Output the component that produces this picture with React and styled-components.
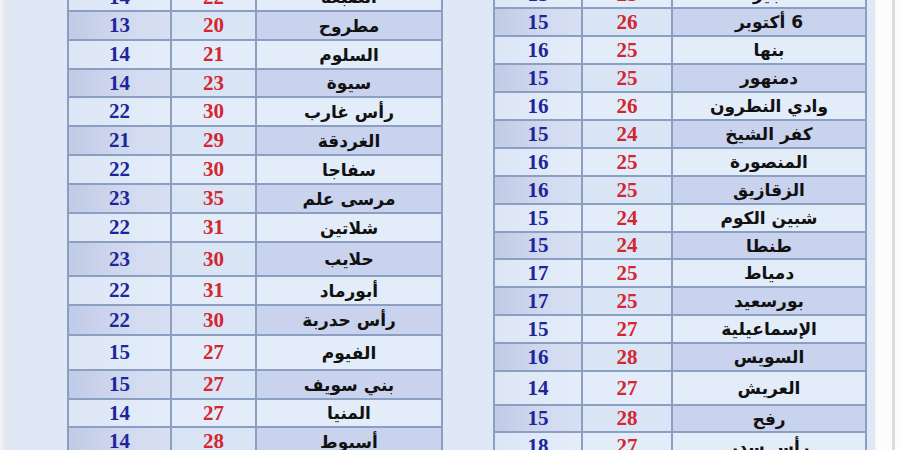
import React from "react"
import styled, { createGlobalStyle } from "styled-components"

const leftRows = [
  { min: 14, max: 22, city: "الضبعة", h: 28 },
  { min: 13, max: 20, city: "مطروح", h: 29 },
  { min: 14, max: 21, city: "السلوم", h: 29 },
  { min: 14, max: 23, city: "سيوة", h: 28 },
  { min: 22, max: 30, city: "رأس غارب", h: 29 },
  { min: 21, max: 29, city: "الغردقة", h: 29 },
  { min: 22, max: 30, city: "سفاجا", h: 29 },
  { min: 23, max: 35, city: "مرسى علم", h: 29 },
  { min: 22, max: 31, city: "شلاتين", h: 29 },
  { min: 23, max: 30, city: "حلايب", h: 34 },
  { min: 22, max: 31, city: "أبورماد", h: 29 },
  { min: 22, max: 30, city: "رأس حدربة", h: 30 },
  { min: 15, max: 27, city: "الفيوم", h: 35 },
  { min: 15, max: 27, city: "بني سويف", h: 29 },
  { min: 14, max: 27, city: "المنيا", h: 28 },
  { min: 14, max: 28, city: "أسيوط", h: 29 },
]

const rightRows = [
  { min: 15, max: 25, city: "الجيزة", h: 28 },
  { min: 15, max: 26, city: "6 أكتوبر", h: 28 },
  { min: 16, max: 25, city: "بنها", h: 28 },
  { min: 15, max: 25, city: "دمنهور", h: 28 },
  { min: 16, max: 26, city: "وادي النطرون", h: 28 },
  { min: 15, max: 24, city: "كفر الشيخ", h: 28 },
  { min: 16, max: 25, city: "المنصورة", h: 28 },
  { min: 16, max: 25, city: "الزقازيق", h: 28 },
  { min: 15, max: 24, city: "شبين الكوم", h: 28 },
  { min: 15, max: 24, city: "طنطا", h: 27 },
  { min: 17, max: 25, city: "دمياط", h: 28 },
  { min: 17, max: 25, city: "بورسعيد", h: 28 },
  { min: 15, max: 27, city: "الإسماعيلية", h: 28 },
  { min: 16, max: 28, city: "السويس", h: 28 },
  { min: 14, max: 27, city: "العريش", h: 34 },
  { min: 15, max: 28, city: "رفح", h: 27 },
  { min: 18, max: 27, city: "رأس سدر", h: 29 },
]

const GlobalStyle = createGlobalStyle`
  html, body {
    margin: 0;
    padding: 0;
    width: 900px;
    height: 450px;
    overflow: hidden;
    background: #dfe9f6;
  }
  * {
    box-sizing: border-box;
  }
`

const Page = styled.div`
  display: flex;
  width: 900px;
  height: 450px;
  overflow: hidden;
  background: #dfe9f6;
`

const EdgeLeft = styled.div`
  width: 8px;
  flex-shrink: 0;
  background: linear-gradient(90deg, #f4f4f6, #e6e8ee 60%, #dde6f2);
`

const Sheet = styled.div`
  display: flex;
  gap: 50px;
  padding-left: 59px;
  width: 863px;
  flex-shrink: 0;
`

const Table = styled.div`
  width: ${(p) => p.$width}px;
  margin-top: ${(p) => p.$offset}px;
  display: flex;
  flex-direction: column;
  border-left: 2px solid #8b9fc2;
  border-right: 2px solid #8b9fc2;
  align-self: flex-start;
`

const Row = styled.div`
  display: grid;
  grid-template-columns: ${(p) => p.$cols};
  height: ${(p) => p.$h}px;
  border-top: 2px solid #8b9fc2;
`

const Cell = styled.div`
  display: flex;
  align-items: center;
  justify-content: center;
  border-left: 2px solid #8b9fc2;
  &:first-child {
    border-left: none;
  }
`

const MinCell = styled(Cell)`
  background: ${(p) =>
    p.$dark
      ? "linear-gradient(90deg, #c2cbe6, #d3dcf0 70%, #d7e0f2)"
      : "linear-gradient(90deg, #dce6f5, #e4edf9)"};
  color: #1d2699;
  font-family: "Liberation Serif", "Times New Roman", serif;
  font-weight: 700;
  font-size: 21px;
`

const MaxCell = styled(Cell)`
  background: ${(p) => (p.$dark ? "#d9e4f5" : "#e3ecf9")};
  color: #d4262f;
  font-family: "Liberation Serif", "Times New Roman", serif;
  font-weight: 700;
  font-size: 21px;
`

const CityCell = styled(Cell)`
  background: ${(p) => (p.$dark ? "#c9d3ed" : "#e3ecf9")};
  color: #111;
  direction: rtl;
  font-family: "DejaVu Sans", "Liberation Sans", sans-serif;
  font-weight: 700;
  font-size: 17px;
`

const EdgeRight = styled.div`
  flex: 1;
  display: flex;
  justify-content: flex-end;
  background: linear-gradient(90deg, #dfe9f6 0, #dfe9f6 4px, #fcfcfd 5px);
  padding-right: 5px;
`

const Rule = styled.div`
  width: 3px;
  background: #dadbdf;
`

const TempTable = ({ rows, width, offset, cols }) => (
  <Table $width={width} $offset={offset}>
    {rows.map((r, i) => {
      const dark = i % 2 === 1
      return (
        <Row key={i} $h={r.h} $cols={cols}>
          <MinCell $dark={dark}>{r.min}</MinCell>
          <MaxCell $dark={dark}>{r.max}</MaxCell>
          <CityCell $dark={dark}>{r.city}</CityCell>
        </Row>
      )
    })}
  </Table>
)

const App = () => {
  return (
    <Page>
      <GlobalStyle />
      <EdgeLeft />
      <Sheet>
        <TempTable rows={leftRows} width={376} offset={-18} cols="101px 85px 1fr" />
        <TempTable rows={rightRows} width={374} offset={-21} cols="86px 90px 1fr" />
      </Sheet>
      <EdgeRight>
        <Rule />
      </EdgeRight>
    </Page>
  )
}

export default App
